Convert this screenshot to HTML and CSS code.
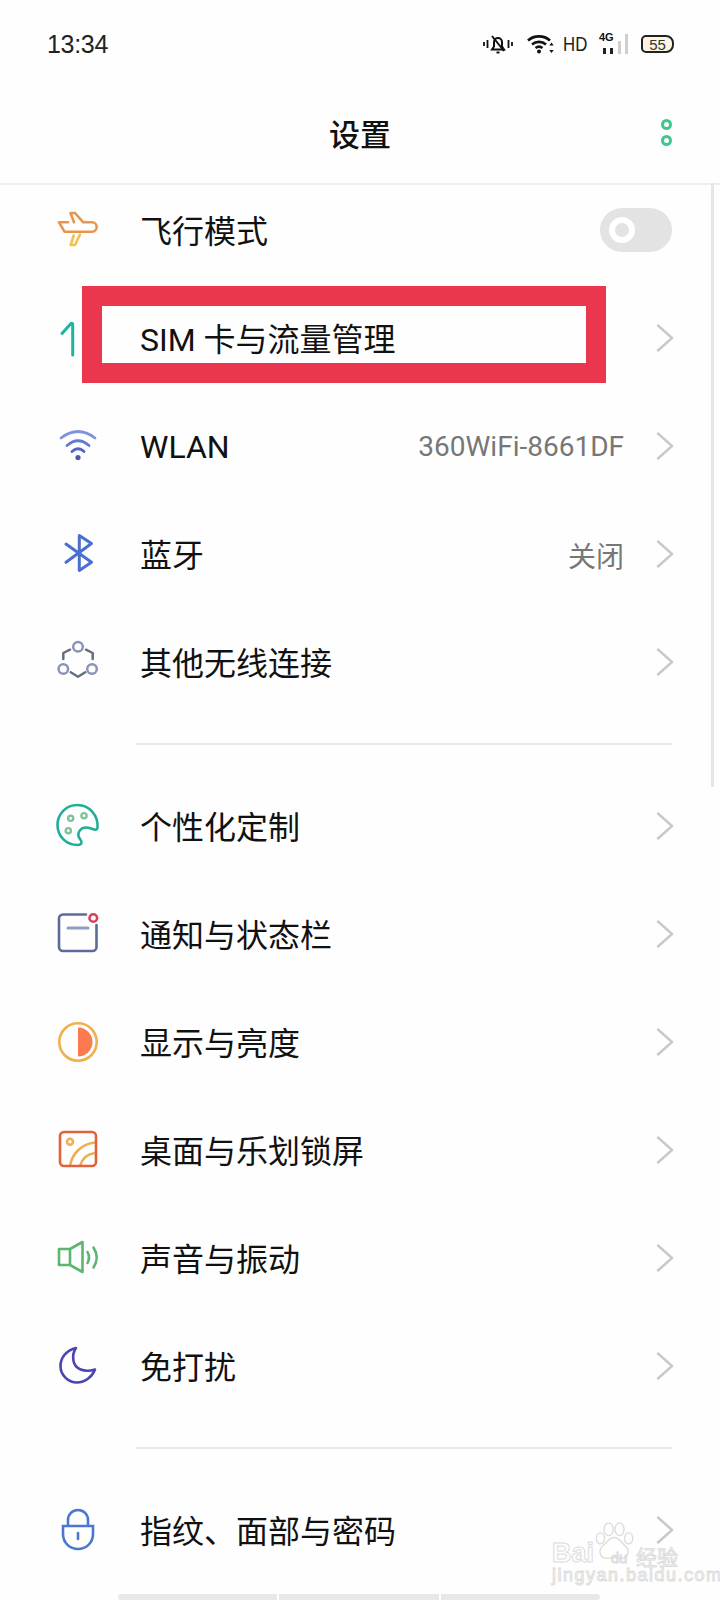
FILE: index.html

```html
<!DOCTYPE html>
<html lang="zh-CN">
<head>
  <meta charset="UTF-8">
  <title>设置</title>
  <link rel="stylesheet" href="styles.css">
</head>
<body>
  <div class="phone">
    <div class="statusbar">
      <span class="time">13:34</span>
      <div class="status-icons">
        <svg class="ico-bell" width="30" height="20" viewBox="0 0 30 20" fill="none" stroke="#111" stroke-width="2">
          <path d="M1 8v4M4.500 6v8M25.500 6v8M29 8v4" stroke-width="1.800"/>
          <path d="M9 15.500h12l-2-3V8a4 4 0 0 0-8 0v4.500z"/>
          <path d="M13.500 18.500h3M9 2l12 15"/>
        </svg>
        <svg class="ico-wifi" width="28" height="20" viewBox="0 0 28 20" fill="none" stroke="#111" stroke-width="2.600">
          <path d="M1 6.500C7 1 17 1 23 6.500M5 10.500c4-3.500 10-3.500 14 0M8.500 14c2-1.500 5-1.500 7 0"/>
          <circle cx="12" cy="17.500" r="2" fill="#111" stroke="none"/>
          <path d="M24.500 8.500l2.200 3h-4.400zM24.500 19l2.200-3h-4.400z" fill="#111" stroke="none"/>
        </svg>
        <span class="hd">HD</span>
        <div class="signal">
          <span class="net">4G</span>
          <i class="bar b1"></i><i class="bar b2"></i><i class="bar b3 off"></i><i class="bar b4 off"></i>
        </div>
        <div class="battery"><span>55</span></div>
      </div>
    </div>

    <header class="titlebar">
      <span></span>
      <h1>设置</h1>
      <div class="more"><i></i><i></i></div>
    </header>

    <div class="list">
      <div class="row">
        <svg class="icon" width="48" height="48" viewBox="0 0 48 48" fill="none" stroke-width="2.600" stroke-linejoin="round" stroke-linecap="round">
          <path stroke="#e8954e" d="M14 16.300H5l5.500 9.400H38a4.700 4.700 0 0 0 0-9.400h-8.700L21 7h-4.500l3.500 9.300"/>
          <path stroke="#f3c14f" d="M26 28.500L21 39h-4.300l3-9.500"/>
        </svg>
        <span class="label">飞行模式</span>
        <div class="toggle"><i></i></div>
      </div>

      <div class="row">
        <svg class="icon" width="48" height="48" viewBox="0 0 48 48" fill="none" stroke="#1db5a0" stroke-width="3" stroke-linecap="round">
          <path d="M8 19.500L17 9.500q1.700-1 1.700 1.500V41"/>
        </svg>
        <span class="label">SIM 卡与流量管理</span>
        <svg class="chev" width="18" height="28" viewBox="0 0 18 28" fill="none"><path d="M2 1.500L16 14 2 26.500"/></svg>
      </div>

      <div class="row">
        <svg class="icon" width="48" height="48" viewBox="0 0 48 48" fill="none" stroke-width="2.800" stroke-linecap="round">
          <path stroke="#7f93de" d="M7 16Q24 3 41 16"/>
          <path stroke="#6578d2" d="M13 23.500Q24 14 35 23.500"/>
          <path stroke="#5663c6" d="M18 29.500Q24 24 30 29.500"/>
          <circle cx="24" cy="35.500" r="2.600" fill="#4a55bb" stroke="none"/>
        </svg>
        <span class="label label-latin">WLAN</span>
        <span class="value">360WiFi-8661DF</span>
        <svg class="chev" width="18" height="28" viewBox="0 0 18 28" fill="none"><path d="M2 1.500L16 14 2 26.500"/></svg>
      </div>

      <div class="row">
        <svg class="icon" width="48" height="48" viewBox="0 0 48 48" fill="none" stroke="#4a6fd0" stroke-width="3" stroke-linejoin="round" stroke-linecap="round">
          <path d="M12 14l25.500 18.300-12.200 8.200V5.500l12.200 8L12 32.300"/>
        </svg>
        <span class="label">蓝牙</span>
        <span class="value">关闭</span>
        <svg class="chev" width="18" height="28" viewBox="0 0 18 28" fill="none"><path d="M2 1.500L16 14 2 26.500"/></svg>
      </div>

      <div class="row">
        <svg class="icon" width="48" height="48" viewBox="0 0 48 48" fill="none" stroke-width="2.500" stroke-linecap="round" stroke-linejoin="round">
          <path stroke="#666e80" d="M9.300 21v-6l6.700-3.300M38.700 21v-6L32 11.700M16.700 34.300L24 38.700l7.300-4.400"/>
          <circle stroke="#8a94ba" cx="24" cy="8.700" r="4.800"/>
          <circle stroke="#8a94ba" cx="9.300" cy="31" r="4.800"/>
          <circle stroke="#8a94ba" cx="38" cy="31" r="4.800"/>
        </svg>
        <span class="label">其他无线连接</span>
        <svg class="chev" width="18" height="28" viewBox="0 0 18 28" fill="none"><path d="M2 1.500L16 14 2 26.500"/></svg>
      </div>

      <div class="divider"></div>

      <div class="row">
        <svg class="icon" width="48" height="48" viewBox="0 0 48 48" fill="none" stroke-width="2.600">
          <path stroke="#20ae96" stroke-linejoin="round" d="M43.500 26C44.500 13 35 3 23.500 3 12 3 3.500 12 3.500 23c0 11 8.500 20 20 20 4.500 0 5-3 2.500-6-4-5 0-12 7-11.500 5 .5 9 4.500 10.500.5z"/>
          <g stroke="#82c29a" stroke-width="2.400">
            <circle cx="16.700" cy="16.300" r="2.600"/>
            <circle cx="30" cy="13.700" r="2.600"/>
            <circle cx="14.300" cy="28.700" r="2.600"/>
          </g>
        </svg>
        <span class="label">个性化定制</span>
        <svg class="chev" width="18" height="28" viewBox="0 0 18 28" fill="none"><path d="M2 1.500L16 14 2 26.500"/></svg>
      </div>

      <div class="row">
        <svg class="icon" width="48" height="48" viewBox="0 0 48 48" fill="none" stroke-linecap="round">
          <path stroke="#5c6c98" stroke-width="2.600" d="M32 4.500H9a4 4 0 0 0-4 4V37a4 4 0 0 0 4 4h29.500a4 4 0 0 0 4-4V15"/>
          <path stroke="#8f9dc0" stroke-width="3" d="M14 18h20"/>
          <circle stroke="#d6405e" stroke-width="2.600" cx="39.300" cy="8" r="3.800"/>
        </svg>
        <span class="label">通知与状态栏</span>
        <svg class="chev" width="18" height="28" viewBox="0 0 18 28" fill="none"><path d="M2 1.500L16 14 2 26.500"/></svg>
      </div>

      <div class="row">
        <svg class="icon" width="48" height="48" viewBox="0 0 48 48" fill="none">
          <circle cx="24" cy="24" r="18.700" stroke="#efb04e" stroke-width="2.600"/>
          <path fill="#fb7b4e" d="M24 9.500a14.500 14.500 0 0 1 0 29z"/>
        </svg>
        <span class="label">显示与亮度</span>
        <svg class="chev" width="18" height="28" viewBox="0 0 18 28" fill="none"><path d="M2 1.500L16 14 2 26.500"/></svg>
      </div>

      <div class="row">
        <svg class="icon" width="48" height="48" viewBox="0 0 48 48" fill="none" stroke-width="2.600">
          <path stroke="#efae52" d="M16 40c2-13 12-22 25-23.500M26 40c2-7 7-12 15-13"/>
          <circle stroke="#efae52" cx="16" cy="15.700" r="3"/>
          <rect stroke="#e2613a" x="6" y="6" width="36" height="34" rx="4"/>
        </svg>
        <span class="label">桌面与乐划锁屏</span>
        <svg class="chev" width="18" height="28" viewBox="0 0 18 28" fill="none"><path d="M2 1.500L16 14 2 26.500"/></svg>
      </div>

      <div class="row">
        <svg class="icon" width="48" height="48" viewBox="0 0 48 48" fill="none" stroke-width="2.600" stroke-linejoin="round" stroke-linecap="round">
          <path stroke="#5cb670" d="M5 15h11L28.500 8v30L16 31H5zM16 15v16"/>
          <path stroke="#5cb670" d="M33.500 18q3 5.500 0 11M39.500 13.500q6.500 10 0 20"/>
        </svg>
        <span class="label">声音与振动</span>
        <svg class="chev" width="18" height="28" viewBox="0 0 18 28" fill="none"><path d="M2 1.500L16 14 2 26.500"/></svg>
      </div>

      <div class="row">
        <svg class="icon" width="48" height="48" viewBox="0 0 48 48" fill="none" stroke="#4a45b5" stroke-width="2.600" stroke-linejoin="round">
          <path d="M22 6C13 8 6.500 15 6.500 24c0 9 7.500 16.500 16.500 16.500 8 0 15-5.500 18-13-11 3.500-20-.5-21.500-8.500-1-5 0-9.500 2.500-13z"/>
        </svg>
        <span class="label">免打扰</span>
        <svg class="chev" width="18" height="28" viewBox="0 0 18 28" fill="none"><path d="M2 1.500L16 14 2 26.500"/></svg>
      </div>

      <div class="divider"></div>

      <div class="row">
        <svg class="icon" width="48" height="48" viewBox="0 0 48 48" fill="none" stroke="#4a78d0" stroke-width="2.600" stroke-linecap="round">
          <path d="M9 20h30v8c0 9-7 15-15 15S9 37 9 28z"/>
          <path d="M14 19v-5a10 10 0 0 1 20 0v5"/>
          <path d="M24 27v6"/>
        </svg>
        <span class="label">指纹、面部与密码</span>
        <svg class="chev" width="18" height="28" viewBox="0 0 18 28" fill="none"><path d="M2 1.500L16 14 2 26.500"/></svg>
      </div>
    </div>

    <div class="scroll-v"></div>
    <div class="navbar"><i></i><i></i><i></i></div>
    <div class="callout"></div>

    <div class="watermark">
      <svg class="paw" width="40" height="40" viewBox="0 0 44 44" fill="none" stroke="#dcdcdc" stroke-width="1.500">
        <ellipse cx="15" cy="8" rx="5" ry="7"/>
        <ellipse cx="27" cy="8" rx="5" ry="7"/>
        <ellipse cx="6" cy="18" rx="4.500" ry="6"/>
        <ellipse cx="37" cy="18" rx="4.500" ry="6"/>
        <path d="M21 17c6 0 8 6 13 10 5 5 2 13-5 13-3 0-5-1-8-1s-5 1-8 1c-7 0-10-8-5-13 5-4 7-10 13-10z"/>
      </svg>
      <div class="wm-top"><span class="wm-bai">Bai</span><span class="wm-du">du</span><span class="wm-cn">经验</span></div>
      <div class="wm-url">jingyan.baidu.com</div>
    </div>
  </div>
</body>
</html>
```

FILE: styles.css

```css
* { box-sizing: border-box; }
body { margin: 0; background: #fff; font-family: Roboto, "Noto Sans CJK SC", sans-serif; color: #111; }
.phone { position: relative; width: 720px; height: 1600px; overflow: hidden; background: #fefefe; }

.statusbar { height: 88px; padding: 0 46px 0 47px; display: flex; align-items: center; justify-content: space-between; }
.time { font-family: "Liberation Sans", sans-serif; font-size: 25px; letter-spacing: -.3px; color: #222; }
.status-icons { display: flex; align-items: center; }
.ico-bell { margin-right: 14px; }
.ico-wifi { margin-right: 8px; }
.hd { display: inline-block; width: 25px; margin-right: 11px; font-family: "Liberation Sans", sans-serif; font-size: 21px; color: #222; transform: scaleX(.8); transform-origin: left center; }
.signal { position: relative; width: 30px; height: 20px; margin-right: 12px; }
.net { position: absolute; left: 0; top: -2px; font-family: "Liberation Sans", sans-serif; font-size: 11px; font-weight: 700; line-height: 1; }
.bar { position: absolute; bottom: 0; width: 3px; background: #222; }
.bar.off { background: #cfcfcf; }
.b1 { left: 4px; height: 6px; }
.b2 { left: 11px; height: 6px; }
.b3 { left: 19px; height: 13px; }
.b4 { left: 26px; height: 20px; }
.battery { width: 33px; height: 18px; border: 2px solid #222; border-radius: 5px 8px 8px 5px; background: #fdf5e0; display: flex; align-items: center; justify-content: center; font-family: "Liberation Sans", sans-serif; font-size: 15px; color: #333; }

.titlebar { height: 97px; padding-bottom: 6px; border-bottom: 2px solid #eeeeee; display: grid; grid-template-columns: 1fr auto 1fr; align-items: center; }
.titlebar h1 { margin: 0; font-size: 31px; font-weight: 500; }
.more { justify-self: end; margin-right: 48px; display: flex; flex-direction: column; gap: 5px; }
.more i { display: block; width: 11px; height: 11px; border: 3px solid #3ec88e; border-radius: 50%; }

.list { height: 1415px; overflow: hidden; }
.row { height: 108px; padding: 0 46px 0 54px; display: flex; align-items: center; }
.row:first-child { margin-top: -9px; }
.icon { flex: none; margin-right: 33px; }
.label { margin-right: auto; padding: 4px 0 0 5px; font-size: 32px; line-height: 1.2; color: #111; }
.label-latin { padding: 2px 0 0 5px; }
.value { padding-top: 1px; font-size: 28px; color: #777; margin-right: 32px; }
.chev { flex: none; }
.chev path { stroke: #c9c9c9; stroke-width: 2.500; stroke-linecap: round; stroke-linejoin: round; }
.toggle { position: relative; width: 72px; height: 44px; margin-right: 2px; border-radius: 22px; background: #e3e3e3; }
.toggle i { position: absolute; left: 9px; top: 9px; width: 26px; height: 26px; border: 6px solid #fff; border-radius: 50%; }
.divider { height: 2px; margin: 27px 48px 27px 136px; background: #e8e8e8; }

.scroll-v { position: absolute; left: 711px; top: 183px; width: 3px; height: 604px; background: #e6e6e6; }
.navbar { position: absolute; left: 118px; top: 1594px; width: 482px; height: 6px; display: flex; gap: 2px; }
.navbar i { flex: 1; background: #e8e8e8; }
.navbar i:first-child { border-radius: 3px 0 0 3px; }
.navbar i:last-child { border-radius: 0 3px 3px 0; }

.callout { position: absolute; left: 82px; top: 286px; width: 524px; height: 97px; border: 20px solid #ea374d; }

.watermark { position: absolute; left: 552px; top: 1522px; width: 150px; height: 62px; color: transparent; -webkit-text-stroke: 1px #dcdcdc; line-height: 1; }
.paw { position: absolute; left: 43px; top: 0; }
.wm-top { position: absolute; left: 0; top: 18px; display: flex; align-items: flex-end; font-family: "Liberation Sans", sans-serif; }
.wm-bai { width: 50px; font-size: 27px; font-weight: 700; }
.wm-du { width: 34px; font-size: 15px; text-align: center; padding-bottom: 2px; }
.wm-cn { font-family: "Noto Sans CJK SC", sans-serif; font-size: 21px; white-space: nowrap; }
.wm-url { position: absolute; left: 0; bottom: 0; font-family: "Liberation Sans", sans-serif; font-size: 18px; letter-spacing: 1.500px; white-space: nowrap; }
```
